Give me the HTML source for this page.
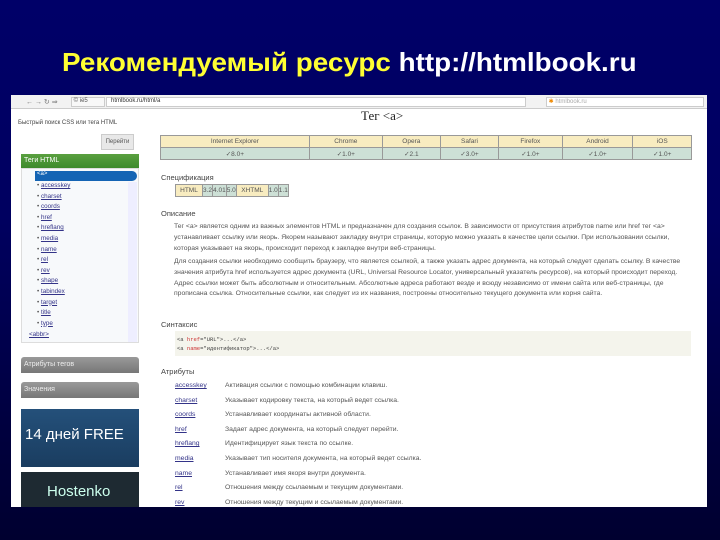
<!DOCTYPE html>
<html><head><meta charset="utf-8"><style>
*{margin:0;padding:0;box-sizing:border-box}
body{width:720px;height:540px;overflow:hidden;background:linear-gradient(#000068 0%,#000060 40%,#00003a 85%,#000030 100%);font-family:"Liberation Sans",sans-serif;position:relative}
.t{position:absolute;left:62px;top:47px;font-size:26px;font-weight:bold;color:#ffff33;white-space:nowrap;transform:scaleX(1.07);transform-origin:0 0}
.t span{color:#fff}
.s{position:absolute;left:11px;top:95px;width:696px;height:412px;background:#fff;overflow:hidden;font-size:6.5px;color:#555}
.a{position:absolute}
.bar{left:0;top:0;width:696px;height:14px;background:#f2f2f2;border-bottom:1px solid #ccc}
.url{left:95px;top:2px;width:420px;height:10px;background:#fff;border:1px solid #ccc;font-size:6px;padding-left:4px;color:#333}
.gb{background:linear-gradient(#5aa040,#3d8a2c);color:#fff;font-size:7px;padding:3px 3px}
.gr{background:linear-gradient(#999,#777);color:#eee;font-size:7px;padding:4px 3px;border-radius:3px 3px 0 0}
table{border-collapse:collapse}
td{border:1px solid #999;text-align:center;font-size:6.5px;height:12px;color:#555}
.h td{background:#f8ecc0}
.v td{background:#cde0d6}
.sec{font-size:7.5px;color:#444}
.ln{font-size:6.8px;color:#555;line-height:11.5px}
.lk{color:#338;text-decoration:underline}
</style></head><body>
<div class="t">Рекомендуемый ресурс <span>http://htmlbook.ru</span></div>
<div class="s">
<div class="a bar"></div>
<div class="a" style="left:15px;top:3px;font-size:7px;color:#777">← → ↻ ⇒</div>
<div class="a" style="left:60px;top:2px;width:34px;height:10px;border:1px solid #ccc;background:#f8f8f8;font-size:6px">&nbsp;© ie5</div>
<div class="a url">htmlbook.ru/html/a</div>
<div class="a" style="left:535px;top:2px;width:158px;height:10px;border:1px solid #ccc;background:#fff;font-size:6px;color:#aaa">&nbsp;<span style="color:#e80">✱</span> htmlbook.ru</div>
<div class="a" style="left:7px;top:25px;font-size:6px;color:#444">Быстрый поиск CSS или тега HTML</div>
<div class="a" style="left:90px;top:39px;width:33px;height:16px;background:#e8e8e8;border:1px solid #ccc;font-size:6px;text-align:center;line-height:14px">Перейти</div>
<div class="a gb" style="left:10px;top:59px;width:118px;height:14px">Теги HTML</div>
<div class="a" style="left:10px;top:73px;width:118px;height:175px;border:1px solid #ddd;background:#f7f9fb"></div>
<div class="a" style="left:24px;top:76px;width:102px;height:10px;background:#1464b4;border-radius:0 6px 6px 0;color:#fff;font-size:6px;padding-left:2px">&lt;a&gt;</div>
<div class="a" style="left:117px;top:87px;width:9px;height:160px;background:#eef"></div>
<div class="a ln" style="left:26px;top:86px;line-height:10.6px;font-size:6.3px">
<div>• <span class="lk">accesskey</span></div><div>• <span class="lk">charset</span></div><div>• <span class="lk">coords</span></div><div>• <span class="lk">href</span></div><div>• <span class="lk">hreflang</span></div><div>• <span class="lk">media</span></div><div>• <span class="lk">name</span></div><div>• <span class="lk">rel</span></div><div>• <span class="lk">rev</span></div><div>• <span class="lk">shape</span></div><div>• <span class="lk">tabindex</span></div><div>• <span class="lk">target</span></div><div>• <span class="lk">title</span></div><div>• <span class="lk">type</span></div></div>
<div class="a ln" style="left:18px;top:234px;font-size:6.3px"><span class="lk">&lt;abbr&gt;</span></div>
<div class="a gr" style="left:10px;top:262px;width:118px;height:16px">Атрибуты тегов</div>
<div class="a gr" style="left:10px;top:287px;width:118px;height:16px">Значения</div>
<div class="a" style="left:10px;top:314px;width:118px;height:58px;background:linear-gradient(#24507a,#1a3d60);color:#fff;font-size:15px;padding:17px 0 0 4px">14 дней FREE</div>
<div class="a" style="left:10px;top:377px;width:118px;height:40px;background:#1e2a32;color:#cfe;font-size:15px;padding:11px 0 0 26px">Hostenko</div>
<div class="a" style="left:350px;top:13px;font-family:'Liberation Serif',serif;font-size:13px;color:#222">Тег &lt;a&gt;</div>
<table class="a" style="left:149px;top:40px;width:532px">
<tr class="h"><td>Internet Explorer</td><td>Chrome</td><td>Opera</td><td>Safari</td><td>Firefox</td><td>Android</td><td>iOS</td></tr>
<tr class="v"><td>✓8.0+</td><td>✓1.0+</td><td>✓2.1</td><td>✓3.0+</td><td>✓1.0+</td><td>✓1.0+</td><td>✓1.0+</td></tr></table>
<div class="a sec" style="left:150px;top:78px">Спецификация</div>
<table class="a" style="left:164px;top:89px"><tr class="v"><td style="background:#f8ecc0;width:27px">HTML</td><td style="width:10px">3.2</td><td style="width:10px">4.01</td><td style="width:10px">5.0</td><td style="background:#f8ecc0;width:32px">XHTML</td><td style="width:9px">1.0</td><td style="width:9px">1.1</td></tr></table>
<div class="a sec" style="left:150px;top:114px">Описание</div>
<div class="a ln" style="left:163px;top:126px;width:515px;line-height:11px">Тег &lt;a&gt; является одним из важных элементов HTML и предназначен для создания ссылок. В зависимости от присутствия атрибутов name или href тег &lt;a&gt; устанавливает ссылку или якорь. Якорем называют закладку внутри страницы, которую можно указать в качестве цели ссылки. При использовании ссылки, которая указывает на якорь, происходит переход к закладке внутри веб-страницы.</div>
<div class="a ln" style="left:163px;top:162px;width:515px;line-height:10.8px">Для создания ссылки необходимо сообщить браузеру, что является ссылкой, а также указать адрес документа, на который следует сделать ссылку. В качестве значения атрибута href используется адрес документа (URL, Universal Resource Locator, универсальный указатель ресурсов), на который происходит переход. Адрес ссылки может быть абсолютным и относительным. Абсолютные адреса работают везде и всюду независимо от имени сайта или веб-страницы, где прописана ссылка. Относительные ссылки, как следует из их названия, построены относительно текущего документа или корня сайта.</div>
<div class="a sec" style="left:150px;top:225px">Синтаксис</div>
<div class="a" style="left:164px;top:236px;width:516px;height:25px;background:#f4f4ec;font-family:'Liberation Mono',monospace;font-size:5.5px;padding:4px 2px;line-height:9px;color:#444">&lt;a <span style="color:#c33">href</span>="URL"&gt;...&lt;/a&gt;<br>&lt;a <span style="color:#c33">name</span>="идентификатор"&gt;...&lt;/a&gt;</div>
<div class="a sec" style="left:150px;top:272px">Атрибуты</div>
<div class="a ln" style="left:164px;top:284px;line-height:14.6px"><div class="lk">accesskey</div><div class="lk">charset</div><div class="lk">coords</div><div class="lk">href</div><div class="lk">hreflang</div><div class="lk">media</div><div class="lk">name</div><div class="lk">rel</div><div class="lk">rev</div></div>
<div class="a ln" style="left:214px;top:284px;line-height:14.6px;width:470px"><div>Активация ссылки с помощью комбинации клавиш.</div><div>Указывает кодировку текста, на который ведет ссылка.</div><div>Устанавливает координаты активной области.</div><div>Задает адрес документа, на который следует перейти.</div><div>Идентифицирует язык текста по ссылке.</div><div>Указывает тип носителя документа, на который ведет ссылка.</div><div>Устанавливает имя якоря внутри документа.</div><div>Отношения между ссылаемым и текущим документами.</div><div>Отношения между текущим и ссылаемым документами.</div></div>
</div>
</body></html>
